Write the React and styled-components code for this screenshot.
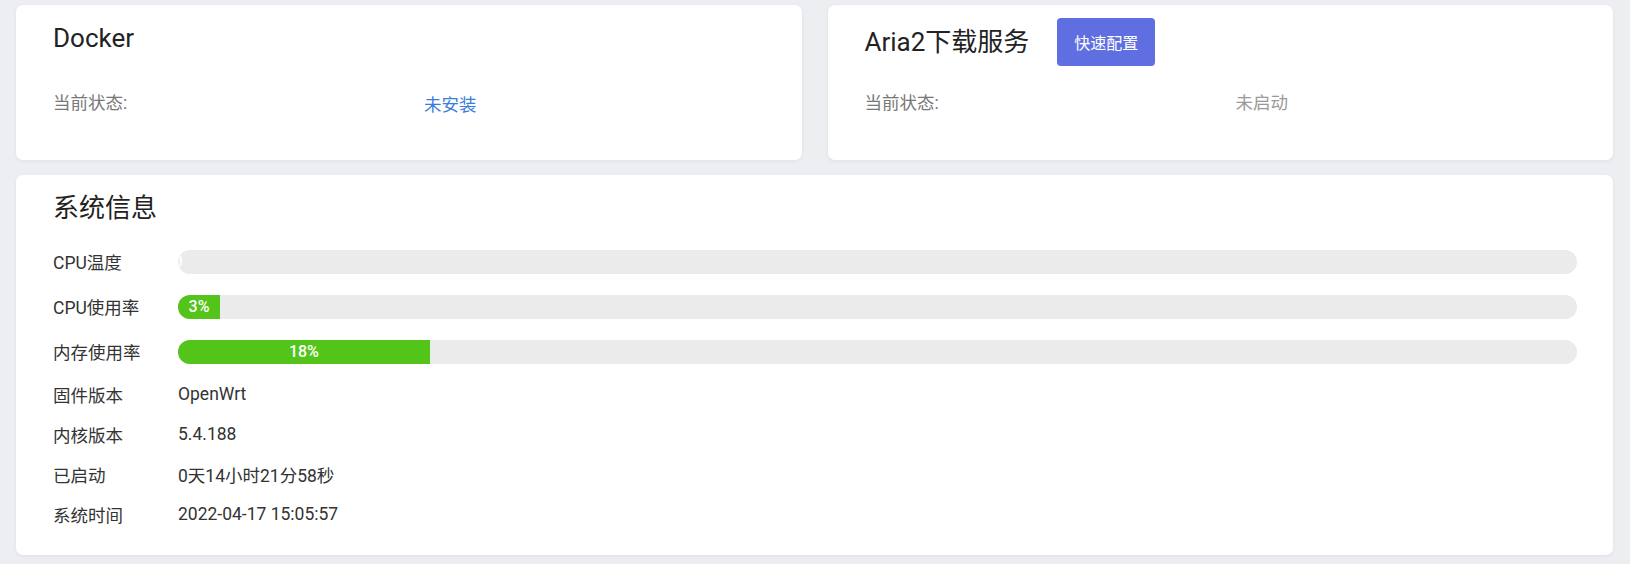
import React from 'react'
import styled, { createGlobalStyle } from 'styled-components'

const GlobalStyle = createGlobalStyle`
  html, body {
    margin: 0;
    padding: 0;
    background: #eceef2;
    font-family: Roboto, "Noto Sans CJK SC", sans-serif;
    color: #333;
  }
`

const Page = styled.div`
  padding: 5px 17px 8px 16px;
  display: flex;
  flex-direction: column;
  gap: 15px;
`

const TopRow = styled.div`
  display: grid;
  grid-template-columns: 1fr 1fr;
  gap: 26px;
`

const Card = styled.div`
  background: #fff;
  border-radius: 7px;
  box-shadow: 0 1px 4px rgba(0, 0, 0, 0.06);
  padding: ${p => p.$padding || '13px 36px 44px 37px'};
`

const Header = styled.div`
  display: flex;
  align-items: ${p => (p.$hasAction ? 'center' : 'flex-start')};
  min-height: 48px;
  gap: 28px;
`

const Title = styled.h2`
  margin: 0;
  font-size: 26px;
  font-weight: 400;
  line-height: 40px;
  color: #222;
`

const Button = styled.button`
  width: 98px;
  height: 48px;
  border: none;
  border-radius: 4px;
  background: #5f6fe1;
  color: #fff;
  font-family: inherit;
  font-size: 16px;
  cursor: pointer;
`

const StatusRow = styled.div`
  display: flex;
  align-items: center;
  height: 30px;
  margin-top: 20px;
`

const StatusLabel = styled.span`
  width: 371px;
  font-size: 17.5px;
  color: #777;
`

const StatusValue = styled.span`
  font-size: 17.5px;
  color: ${p => p.$color};
  margin-top: ${p => p.$offset || 0}px;
`

const SysTitle = styled(Title)`
  line-height: 36px;
  margin-bottom: 13px;
`

const Row = styled.div`
  display: flex;
  align-items: center;
  height: ${p => p.$height}px;
  font-size: 17.5px;
`

const Label = styled.span`
  width: 125px;
  flex-shrink: 0;
  color: #333;
`

const Value = styled.span`
  color: #333;
`

const Track = styled.div`
  flex: 1;
  height: 24px;
  border-radius: 12px;
  background: #ebebeb;
  overflow: hidden;
  display: flex;
`

const Fill = styled.div`
  height: 100%;
  background: #52c41a;
  display: flex;
  align-items: center;
  justify-content: center;
  color: #fff;
  font-size: 16px;
  font-weight: 500;
  white-space: nowrap;
  overflow: visible;
`

const bars = [
  { label: 'CPU温度', value: 0, text: '0' },
  { label: 'CPU使用率', value: 3, text: '3%' },
  { label: '内存使用率', value: 18, text: '18%' },
]

const infos = [
  ['固件版本', 'OpenWrt'],
  ['内核版本', '5.4.188'],
  ['已启动', '0天14小时21分58秒'],
  ['系统时间', '2022-04-17 15:05:57'],
]

const App = () => {
  return (
    <>
      <GlobalStyle />
      <Page>
        <TopRow>
          <Card>
            <Header>
              <Title>Docker</Title>
            </Header>
            <StatusRow>
              <StatusLabel>当前状态:</StatusLabel>
              <StatusValue $color="#3b7ddb" $offset={5}>未安装</StatusValue>
            </StatusRow>
          </Card>
          <Card>
            <Header $hasAction>
              <Title>Aria2下载服务</Title>
              <Button>快速配置</Button>
            </Header>
            <StatusRow>
              <StatusLabel>当前状态:</StatusLabel>
              <StatusValue $color="#999">未启动</StatusValue>
            </StatusRow>
          </Card>
        </TopRow>
        <Card $padding="15px 36px 21px 37px">
          <SysTitle>系统信息</SysTitle>
          {bars.map(b => (
            <Row key={b.label} $height={45}>
              <Label>{b.label}</Label>
              <Track>
                <Fill style={{ width: `${b.value}%` }}>{b.text}</Fill>
              </Track>
            </Row>
          ))}
          {infos.map(([k, v]) => (
            <Row key={k} $height={40}>
              <Label>{k}</Label>
              <Value>{v}</Value>
            </Row>
          ))}
        </Card>
      </Page>
    </>
  )
}

export default App
